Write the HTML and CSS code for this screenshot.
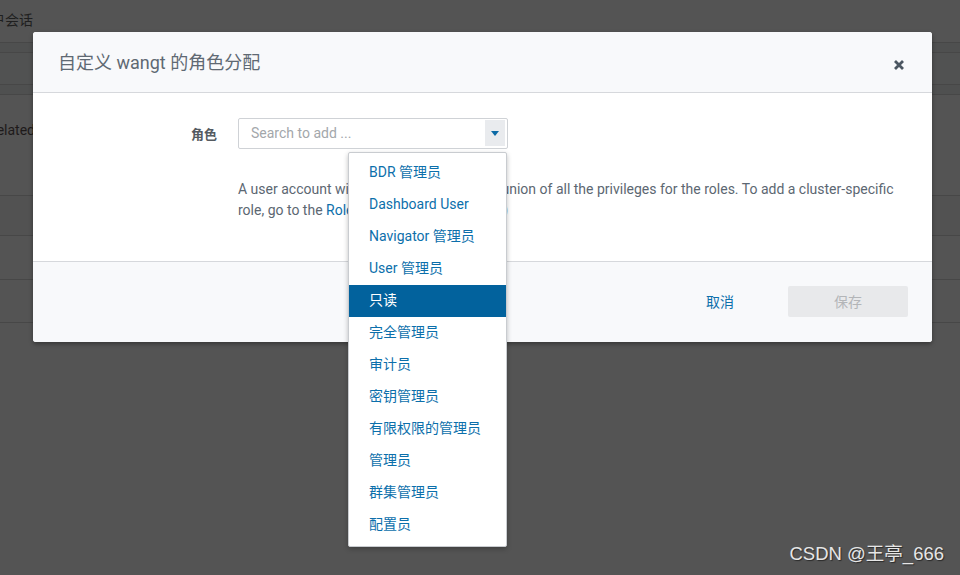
FILE: index.html
```html
<!DOCTYPE html>
<html lang="zh-CN">
<head>
<meta charset="utf-8">
<title>角色分配</title>
<link rel="stylesheet" href="styles.css">
</head>
<body>
<div class="bg-page">
  <div class="bg-row bg-top"><span class="bg-title">户会话</span></div>
  <div class="bg-row bg-band1"></div>
  <div class="bg-row bg-r2"></div>
  <div class="bg-row bg-band2"></div>
  <div class="bg-row bg-r3"><span class="bg-text">Related</span></div>
  <div class="bg-row bg-r4"></div>
  <div class="bg-row bg-r5"></div>
  <div class="bg-row bg-r6"></div>
</div>

<div class="modal">
  <div class="modal-header">
    <h3 class="modal-title">自定义 wangt 的角色分配</h3>
    <svg class="close" width="12" height="12" viewBox="0 0 12 12"><path d="M2 2 L10 10 M10 2 L2 10" stroke="#4b5661" stroke-width="2.8" stroke-linecap="butt"/></svg>
  </div>
  <div class="modal-body">
    <div class="form-row">
      <label class="form-label">角色</label>
      <div class="select">
        <span class="placeholder">Search to add ...</span>
        <span class="select-btn"><svg width="8" height="5" viewBox="0 0 8 5"><path d="M0 0 H8 L4 5 Z" fill="#0b6aa6"/></svg></span>
        <ul class="menu">
          <li>BDR 管理员</li>
          <li>Dashboard User</li>
          <li>Navigator 管理员</li>
          <li>User 管理员</li>
          <li class="active">只读</li>
          <li>完全管理员</li>
          <li>审计员</li>
          <li>密钥管理员</li>
          <li>有限权限的管理员</li>
          <li>管理员</li>
          <li>群集管理员</li>
          <li>配置员</li>
        </ul>
      </div>
    </div>
    <p class="help">A user account with multiple roles has the union of all the privileges for the roles. To add a cluster-specific role, go to the <a class="link">Roles</a> page. (<b>Enterprise Only</b>)</p>
  </div>
  <div class="modal-footer">
    <a class="cancel">取消</a>
    <span class="btn-save">保存</span>
  </div>
</div>

<div class="watermark">CSDN @王亭_666</div>
</body>
</html>
```

FILE: styles.css
```css
* { box-sizing: border-box; }
html, body { margin: 0; padding: 0; }
body {
  width: 960px;
  height: 575px;
  overflow: hidden;
  background: #545454;
  font-family: Roboto, "Noto Sans CJK SC", sans-serif;
  position: relative;
}

.bg-page { width: 960px; }
.bg-row { border-bottom: 1px solid #474747; }
.bg-top { height: 43px; padding-top: 10px; }
.bg-title { display: block; margin-left: -9px; font-size: 14px; color: #1f1f1f; line-height: 20px; }
.bg-band1 { height: 10px; background: #4f5050; }
.bg-r2 { height: 32px; background: #515252; }
.bg-band2 { height: 10px; background: #4f5050; }
.bg-r3 { height: 101px; padding-top: 25px; }
.bg-text { display: block; margin-left: -12px; font-size: 14px; color: #1e1a1a; line-height: 20px; }
.bg-r4 { height: 40px; background: #525252; }
.bg-r5 { height: 44px; }
.bg-r6 { height: 43px; }

.modal {
  position: absolute;
  left: 33px;
  top: 32px;
  width: 899px;
  height: 310px;
  background: #fff;
  border-radius: 3px;
  box-shadow: 0 2px 4px rgba(0,0,0,0.35);
  display: flex;
  flex-direction: column;
}
.modal-header {
  height: 61px;
  background: #f8f9fb;
  border-bottom: 1px solid #d6d8dc;
  border-radius: 3px 3px 0 0;
  display: flex;
  align-items: center;
  justify-content: space-between;
  padding: 0 27px 0 25px;
}
.modal-title {
  margin: 0;
  font-size: 18px;
  font-weight: 400;
  color: #5f6973;
  padding-bottom: 3px;
}
.close { margin-top: 6px; }

.modal-body {
  height: 169px;
  padding-top: 25px;
  border-bottom: 1px solid #d6d8dc;
}
.form-row {
  display: grid;
  grid-template-columns: 184px 270px;
  column-gap: 21px;
  align-items: center;
}
.form-label {
  text-align: right;
  font-size: 13px;
  font-weight: 700;
  color: #555b61;
}
.select {
  position: relative;
  height: 31px;
  border: 1px solid #cfd2d6;
  border-radius: 2px;
  display: flex;
  align-items: center;
  justify-content: space-between;
  padding: 0 2px 1px 12px;
}
.placeholder { font-size: 14px; color: #a3a7ab; }
.select-btn {
  width: 20px;
  height: 26px;
  background: #e9ebee;
  display: flex;
  align-items: center;
  justify-content: center;
}
.menu {
  position: absolute;
  left: 109px;
  top: 33px;
  width: 159px;
  margin: 0;
  padding: 4px 0 5px;
  list-style: none;
  background: #fff;
  border: 1px solid #c9ccd0;
  border-radius: 2px;
  box-shadow: 0 2px 5px rgba(0,0,0,0.25);
  z-index: 5;
}
.menu li {
  height: 32px;
  line-height: 31px;
  padding-left: 20px;
  font-size: 14px;
  color: #0c6fab;
}
.menu li.active { background: #02629d; color: #fff; }

.help {
  margin: 30px 0 0 205px;
  width: 672px;
  font-size: 14px;
  line-height: 21px;
  color: #5c6772;
}
.help b { color: #4f5963; }
.link { color: #0c6fab; }

.modal-footer {
  flex: 1;
  background: #f8f9fb;
  border-radius: 0 0 3px 3px;
  display: flex;
  align-items: center;
  justify-content: flex-end;
  padding: 0 24px 2px 0;
}
.cancel {
  font-size: 14px;
  color: #0c6fab;
  margin-right: 54px;
}
.btn-save {
  width: 120px;
  height: 31px;
  background: #e8e9eb;
  border-radius: 2px;
  color: #b3b5b8;
  font-size: 14px;
  display: flex;
  align-items: center;
  justify-content: center;
}

.watermark {
  position: absolute;
  right: 16px;
  bottom: 10px;
  font-size: 18.5px;
  color: #e6e6e6;
  text-shadow: 1px 1px 1px rgba(0,0,0,0.5);
  font-family: "Liberation Sans", "Noto Sans CJK SC", sans-serif;
}
```
